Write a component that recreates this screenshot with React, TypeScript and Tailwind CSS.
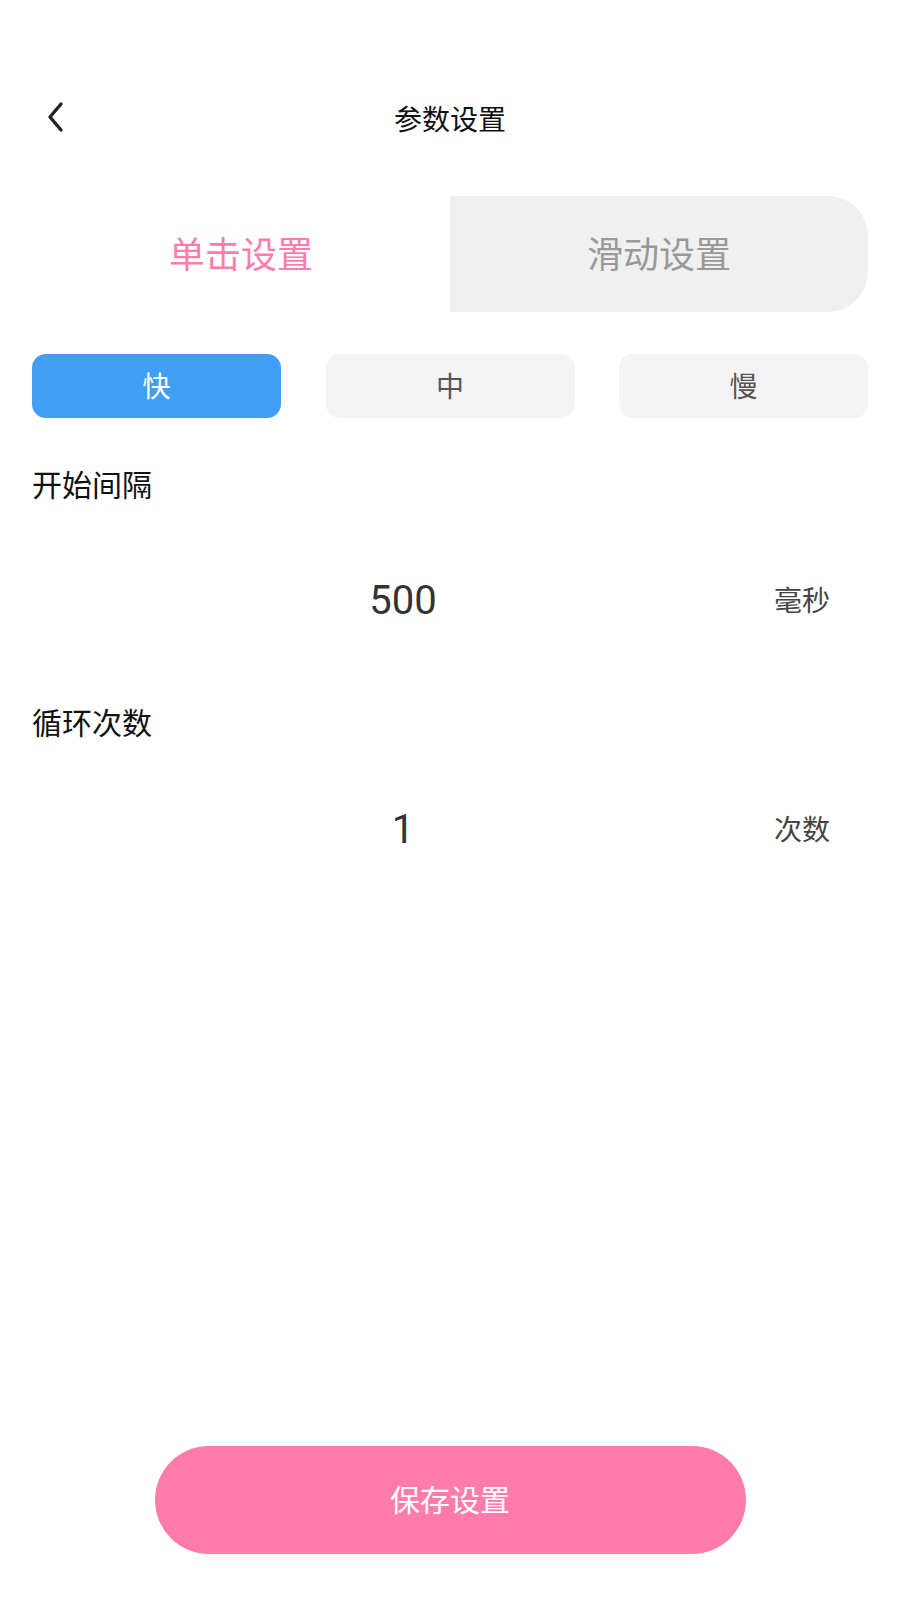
import { useState } from 'react';

const cjk = "font-['Noto_Sans_CJK_SC',sans-serif]";

const speeds = ['快', '中', '慢'];

function BackIcon() {
  return (
    <svg width="22" height="32" viewBox="0 0 22 32" fill="none">
      <path d="M16 3 L5 16 L16 29" stroke="#222" strokeWidth="3.4" strokeLinecap="round" strokeLinejoin="round" />
    </svg>
  );
}

function ValueRow({ value, unit }: { value: string; unit: string }) {
  return (
    <div className="flex items-center h-[80px] px-[32px]">
      <div className="w-[742px] text-center text-[40px] text-[#333] font-['Roboto',sans-serif]">{value}</div>
      <div className={`${cjk} pb-[5px] text-[28px] text-[#444]`}>{unit}</div>
    </div>
  );
}

export default function App() {
  const [tab, setTab] = useState(0);
  const [speed, setSpeed] = useState(0);

  return (
    <div className={`${cjk} w-[900px] h-[1600px] bg-white flex flex-col`}>
      {/* header */}
      <div className="mt-[78px] h-[78px] grid grid-cols-[1fr_auto_1fr] items-center">
        <div className="pl-[45px] flex items-center">
          <BackIcon />
        </div>
        <div className="pt-[2px] text-[28px] text-[#111]">参数设置</div>
        <div />
      </div>

      {/* tabs */}
      <div className="mt-[40px] mx-[32px] h-[116px] flex">
        {['单击设置', '滑动设置'].map((t, i) => (
          <button
            key={t}
            onClick={() => setTab(i)}
            className={`flex-1 flex items-center justify-center pb-[4px] text-[36px] ${
              tab === i ? 'bg-white text-[#ff7bac]' : 'bg-[#f0f0f0] text-[#999]'
            } ${i === 1 ? 'rounded-r-[40px]' : ''}`}
          >
            {t}
          </button>
        ))}
      </div>

      {/* speed presets */}
      <div className="mt-[42px] px-[32px] flex justify-between">
        {speeds.map((s, i) => (
          <button
            key={s}
            onClick={() => setSpeed(i)}
            className={`w-[249px] h-[64px] rounded-[14px] flex items-center justify-center pb-[2px] text-[28px] ${
              speed === i ? 'bg-[#409ef5] text-white' : 'bg-[#f4f4f4] text-[#555]'
            }`}
          >
            {s}
          </button>
        ))}
      </div>

      <div className="mt-[45px] h-[40px] px-[32px] flex items-center text-[30px] text-[#111]">开始间隔</div>
      <div className="mt-[58px]">
        <ValueRow value="500" unit="毫秒" />
      </div>

      <div className="mt-[60px] h-[40px] px-[32px] flex items-center text-[30px] text-[#111]">循环次数</div>
      <div className="mt-[49px]">
        <ValueRow value="1" unit="次数" />
      </div>

      <button className="mt-auto mb-[46px] mx-auto w-[591px] h-[108px] rounded-full bg-[#ff7bac] pb-[4px] text-white text-[30px]">
        保存设置
      </button>
    </div>
  );
}
